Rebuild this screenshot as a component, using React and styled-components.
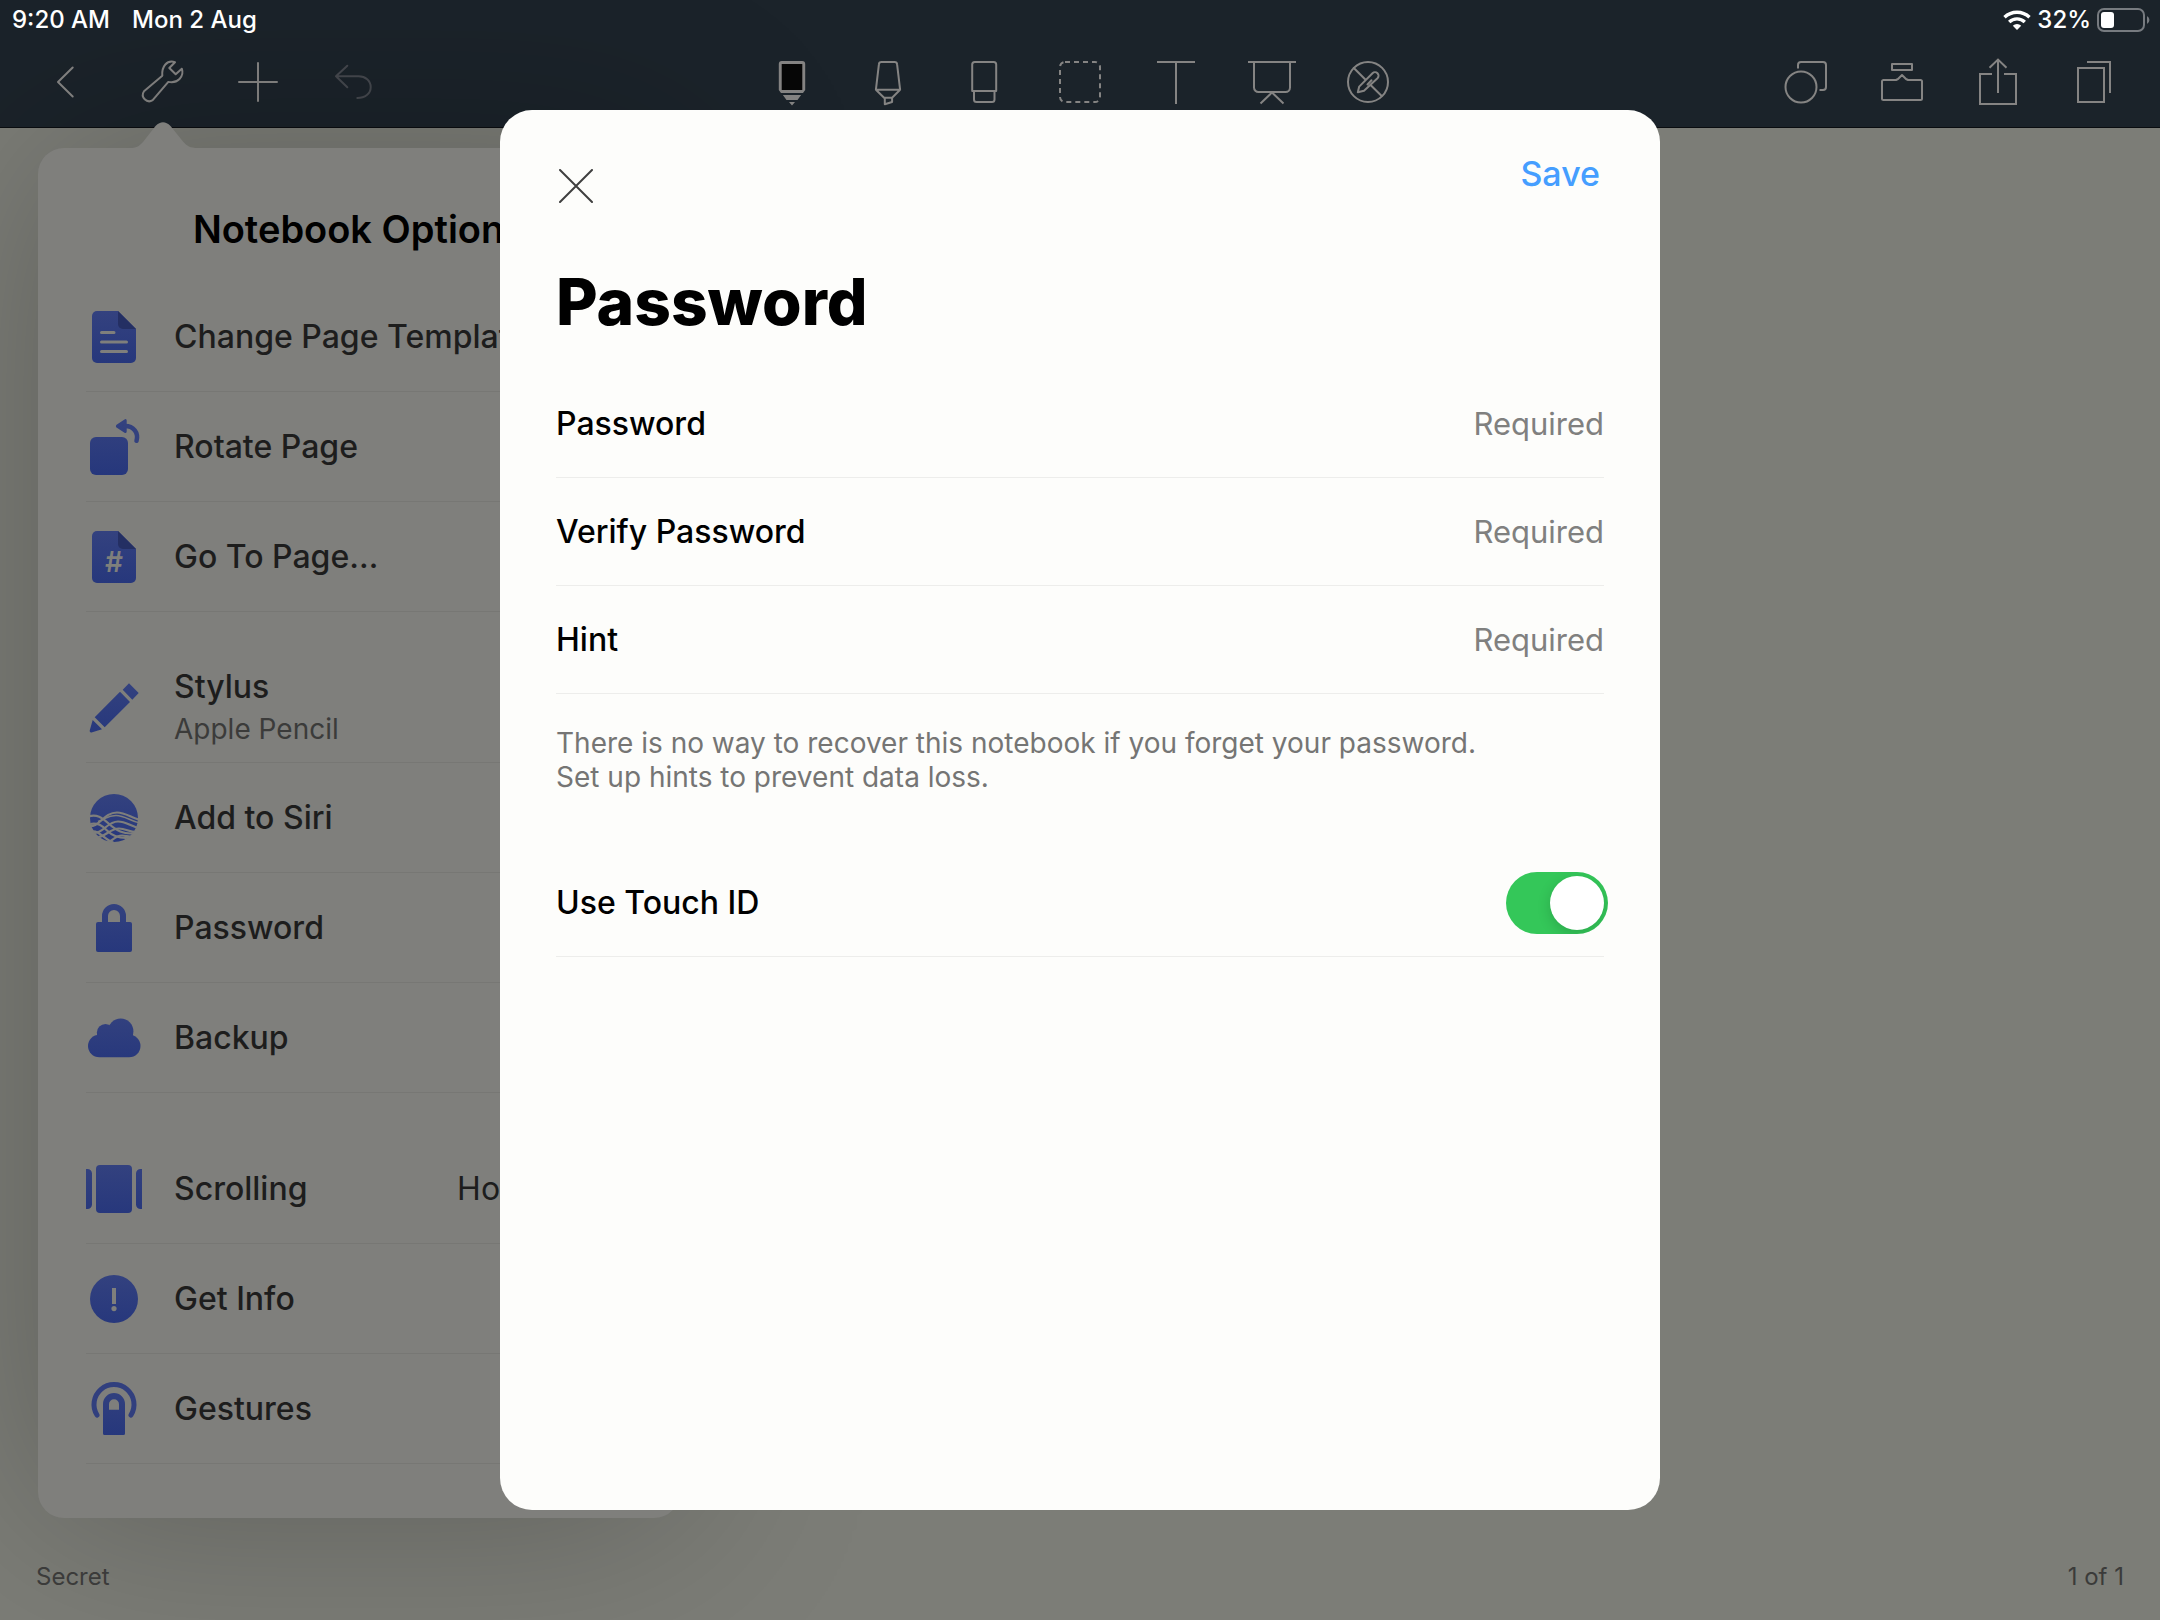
import React, { useState } from "react";
import styled, { createGlobalStyle } from "styled-components";

const color = {
  bar: "#1b232a",
  barEdge: "#0a0d10",
  line: "#858483",
  lineOff: "#45484e",
  canvas: "#7c7d77",
  popover: "#7f7f7c",
  popoverRule: "#777774",
  ink: "#1d1d1d",
  inkSoft: "#3b3b3a",
  sheet: "#fdfdfb",
  sheetRule: "#ededeb",
  accent: "#459eff",
  green: "#34c759",
};

const GlobalStyle = createGlobalStyle`
  *, *::before, *::after { box-sizing: border-box; }
  body { margin: 0; background: ${color.canvas}; }
  body, button, input { font-family: Inter, "Liberation Sans", sans-serif; }
  button { border: 0; padding: 0; background: none; color: inherit; cursor: pointer; }
  svg { display: block; flex: none; }
`;

const Screen = styled.div`
  position: relative;
  min-height: 100vh;
  display: flex;
  flex-direction: column;
  background: ${color.canvas};
  overflow: hidden;
`;

/* ---------- top bar ---------- */

const TopBar = styled.header`
  background: ${color.bar};
  border-bottom: 1px solid ${color.barEdge};
`;

const StatusBar = styled.div`
  position: relative;
  z-index: 1;
  display: flex;
  justify-content: space-between;
  align-items: center;
  height: 40px;
  padding: 0 10px 0 12px;
  color: #fff;
  font-size: 24px;
  font-weight: 500;
  line-height: 32px;
`;

const StatusGroup = styled.div`
  display: flex;
  align-items: center;
  gap: ${(p) => p.$gap}px;
`;

const Toolbar = styled.nav`
  display: grid;
  grid-template-columns: 1fr auto 1fr;
  height: 87px;
  padding: 0 18px 4px;
`;

const ToolGroup = styled.div`
  display: flex;
  justify-content: ${(p) => (p.$end ? "flex-end" : "flex-start")};
`;

const ToolButton = styled.button`
  width: 96px;
  display: grid;
  place-items: center;
  color: ${(p) => (p.disabled ? color.lineOff : color.line)};
`;

const ToolSvg = ({ children }) => (
  <svg width="48" height="48" viewBox="0 0 48 48" fill="none" stroke="currentColor"
    strokeWidth="2" strokeLinecap="round" strokeLinejoin="round" aria-hidden="true">
    {children}
  </svg>
);

const leftTools = [
  { name: "Back", art: <path d="M30.7 9.5 16 24l14.7 14.5" /> },
  {
    name: "Notebook options",
    art: <path d="M37 4.2C29 1.500 23.500 8.500 24.300 17.700L6 33.200a6.400 6.400 0 0 0 8.700 9L30.300 23.900C39.500 26 46.500 18.500 43.800 10.700L37.700 16.300 31.300 10Z" />,
  },
  { name: "Add", art: <path d="M24 5v38M5 24h38" /> },
  { name: "Undo", disabled: true, art: <path d="M17.300 7.800 6 18.300l11.300 11M6 18.300h22.700c6.600 0 12 4.500 12 10.900S35 40 27.300 40" /> },
];

const centerTools = [
  {
    name: "Pen",
    art: (
      <>
        <path fill="currentColor" stroke="none" d="M13.800 3h20.400a3 3 0 0 1 3 3v26l-2.200 3H13l-2.200-3V6a3 3 0 0 1 3-3ZM14.900 37h18.200l-3.600 5h-11ZM21 44h6l-3 3.500Z" />
        <path fill="#070707" stroke="none" d="M13.700 6h20.600v26H13.700Z" />
      </>
    ),
  },
  {
    name: "Highlighter",
    art: (
      <path d="M17.500 4h13q2.400 0 2.600 2.400l3 25.300-8 8h-8l-8.200-8 3-25.300Q15.100 4 17.500 4ZM11.900 31.700h24.200M20.800 39.700v6.500l7.300-2.200v-4.300" />
    ),
  },
  {
    name: "Eraser",
    art: (
      <>
        <path d="M14.700 4h19a2.500 2.500 0 0 1 2.500 2.500V33h-24V6.500A2.500 2.500 0 0 1 14.700 4Z" />
        <path d="M14 33v8.500a2.500 2.500 0 0 0 2.500 2.500H32a2.500 2.500 0 0 0 2.500-2.500V33" />
      </>
    ),
  },
  {
    name: "Lasso",
    art: <rect x="4" y="4" width="40" height="40" rx="5" strokeDasharray="5 4" strokeLinecap="butt" />,
  },
  { name: "Text", art: <path strokeLinecap="butt" d="M5 4h38M24 4v42" /> },
  {
    name: "Presentation",
    art: <path strokeLinecap="butt" d="M0 4h48M6 4v25.500a4.500 4.500 0 0 0 4.500 4.500h27a4.500 4.500 0 0 0 4.500-4.500V4M12.500 45.500 24 34.500l11.500 11" />,
  },
  {
    name: "Drawing off",
    art: (
      <>
        <circle cx="24" cy="24" r="20" />
        <path d="M9.800 10l11 11M26.800 27.300 37.700 38M13.800 34.200l1.400-5.600 13.300-13.300a3.500 3.500 0 0 1 5 5L20 32.700ZM23.500 26.500l4-4.200" />
      </>
    ),
  },
];

const rightTools = [
  {
    name: "Shapes",
    art: (
      <>
        <circle cx="19" cy="29" r="15.500" />
        <path strokeLinecap="butt" d="M16 10.500V7a3 3 0 0 1 3-3h22a3 3 0 0 1 3 3v22a3 3 0 0 1-3 3h-3.500" />
      </>
    ),
  },
  {
    name: "Toolbox",
    art: (
      <>
        <rect x="14" y="6" width="20" height="6" />
        <path d="M5.500 22H18l2-1 4-4 4 4 2 1h12.500a1.500 1.500 0 0 1 1.500 1.500v17a1.500 1.500 0 0 1-1.500 1.500h-37a1.500 1.500 0 0 1-1.500-1.500v-17A1.500 1.500 0 0 1 5.500 22Z" />
      </>
    ),
  },
  { name: "Share", art: <path strokeLinecap="butt" strokeLinejoin="miter" d="M18 16H6v30h36V16H30M24 1.500V35M15.500 9.800 24 1.600l8.500 8.200" /> },
  { name: "Pages", art: <path strokeLinecap="butt" strokeLinejoin="miter" d="M8 10h26v34H8ZM17 4h23v31" /> },
];

const ToolSet = ({ tools, end }) => (
  <ToolGroup $end={end}>
    {tools.map((t) => (
      <ToolButton key={t.name} type="button" aria-label={t.name} disabled={t.disabled}>
        <ToolSvg>{t.art}</ToolSvg>
      </ToolButton>
    ))}
  </ToolGroup>
);

const WifiIcon = () => (
  <svg width="28" height="20" viewBox="0 0 28 20" fill="none" stroke="#fff" strokeWidth="3.400" aria-hidden="true">
    <path d="M1.500 7.300a18 18 0 0 1 25 0M6.200 12a11.300 11.300 0 0 1 15.600 0" />
    <path fill="#fff" stroke="none" d="M14 20l-4.200-4.300a6 6 0 0 1 8.400 0Z" />
  </svg>
);

const BatteryIcon = () => (
  <svg width="53" height="24" viewBox="0 0 53 24" fill="none" aria-hidden="true">
    <rect x="1" y="1" width="46" height="22" rx="6" stroke="#777b80" strokeWidth="2" />
    <rect x="4" y="4" width="13" height="16" rx="3" fill="#fff" />
    <path d="M50 8a4.500 4.500 0 0 1 0 8Z" fill="#777b80" />
  </svg>
);

/* ---------- notebook options popover ---------- */

const Popover = styled.aside`
  position: absolute;
  top: 148px;
  left: 38px;
  width: 642px;
  padding: 48px 48px 54px;
  border-radius: 26px;
  background: ${color.popover};
  box-shadow: 0 0 200px rgba(0, 0, 0, 0.24);
`;

const PopoverArrow = styled.svg`
  position: absolute;
  top: -26px;
  left: 92px;
`;

const PopoverTitle = styled.h2`
  margin: 0 0 20px;
  color: #000;
  font-size: 38px;
  font-weight: 600;
  line-height: 66px;
  text-align: center;
`;

const MenuGroup = styled.ul`
  list-style: none;
  margin: 0;
  padding: 0;

  & + & {
    margin-top: 41px;
  }
`;

const MenuItem = styled.li`
  border-bottom: 1px solid ${color.popoverRule};
`;

const MenuButton = styled.button`
  width: 100%;
  height: 109px;
  display: flex;
  align-items: center;
  gap: 32px;
  color: ${color.ink};
  font-size: 32px;
  line-height: 40px;
  text-align: left;
  white-space: nowrap;
`;

const MenuText = styled.span`
  flex: 1;
  display: flex;
  flex-direction: column;
  gap: 2px;
  font-weight: 500;
`;

const MenuNote = styled.span`
  color: ${color.inkSoft};
  font-size: 28px;
  font-weight: 400;
`;

const MenuValue = styled.span`
  padding-right: 20px;
`;

const MenuSvg = ({ children }) => (
  <svg width="56" height="56" viewBox="0 0 56 56" fill="url(#menu-blue)" aria-hidden="true">
    {children}
  </svg>
);

const GradientDefs = styled.svg`
  position: absolute;
`;

const BlueGradient = () => (
  <GradientDefs width="0" height="0" aria-hidden="true">
    <defs>
      <linearGradient id="menu-blue" gradientUnits="userSpaceOnUse" x1="0" y1="0" x2="0" y2="56">
        <stop offset="0" stopColor="#34427f" />
        <stop offset="1" stopColor="#26377c" />
      </linearGradient>
      <clipPath id="siri-disc">
        <circle cx="28" cy="28" r="24.500" />
      </clipPath>
    </defs>
  </GradientDefs>
);

const DocShape = () => (
  <>
    <path d="M11 2h21l18 18v29a5 5 0 0 1-5 5H11a5 5 0 0 1-5-5V7a5 5 0 0 1 5-5Z" />
    <path fill="#242f63" d="M32 2l18 18H37a5 5 0 0 1-5-5Z" />
  </>
);

const menu = [
  [
    {
      label: "Change Page Template",
      art: (
        <>
          <DocShape />
          <path stroke={color.popover} strokeWidth="3" strokeLinecap="round" d="M15.500 23.500h12.500M15.500 33h25M15.500 42.500h25" />
        </>
      ),
    },
    {
      label: "Rotate Page",
      art: (
        <>
          <rect x="4" y="18" width="38" height="38" rx="6" />
          <path d="M30.500 5.800 38.500.4q2.200-1 2.200 1.200v11q0 2.200-2.200 1.100L30.500 8.400q-1.200-1.200 0-2.600Z" />
          <path fill="none" stroke="#33417e" strokeWidth="4.500" strokeLinecap="round" d="M39 7c8.500 0 13.800 6.500 11.500 14.800" />
        </>
      ),
    },
    {
      label: "Go To Page…",
      art: (
        <>
          <DocShape />
          <text x="28" y="43" textAnchor="middle" fontFamily="Inter, sans-serif" fontSize="28" fontWeight="600" fill={color.popover}>#</text>
        </>
      ),
    },
  ],
  [
    {
      label: "Stylus",
      note: "Apple Pencil",
      art: <path d="M43 3.300 52.700 13 46.300 19.700 36.700 9.700ZM34 11.700 44 22 18.700 47.300 8.700 37.300ZM6.700 40 16 49.300 5.500 52.500Q3.400 52.800 3.700 50.500Z" />,
    },
    {
      label: "Add to Siri",
      art: (
        <>
          <circle cx="28" cy="28" r="24" />
          <g clipPath="url(#siri-disc)" fill="none" stroke={color.popover} strokeWidth="2.200">
            <path d="M2 26.500c9-2.500 14 1 20 6.500s16 14 32 9" />
            <path d="M2 36c12 2 15-13.500 29-13.500 9 0 15 6 24 7.500" />
            <path strokeWidth="1.600" d="M12 31.500c8-3 10-6 18-6 9 0 15 6 24 7.500" />
            <path d="M4 43c14 2 16-11.500 28-11.500 9 0 12 5 22 6.500" />
            <path d="M9 48c11-1 15-9.500 24-9.500 8 0 10 4.500 20 3.500" />
            <path d="M4 34c8-1.500 12 1.500 17 6.500s12 9 25 7" />
            <path d="M18 54c8-1.500 10-8.500 18-8.500 4 0 8 2 14 1" />
            <path d="M5 41.500c9-1.500 12 7.500 24 12" />
          </g>
        </>
      ),
    },
    {
      label: "Password",
      art: (
        <>
          <rect x="10" y="22" width="36" height="30" rx="2" />
          <path d="M16 23v-7a12 12 0 0 1 24 0v7h-6v-7a6 6 0 0 0-12 0v7Z" />
        </>
      ),
    },
    {
      label: "Backup",
      art: (
        <>
          <rect x="2" y="24.700" width="52.500" height="22.600" rx="11.300" />
          <circle cx="19.500" cy="22.700" r="8.700" />
          <circle cx="34.700" cy="21.300" r="12.700" />
          <path d="M11 22h36v12H11Z" />
        </>
      ),
    },
  ],
  [
    {
      label: "Scrolling",
      value: "Horizontal",
      art: (
        <>
          <rect x="10" y="4" width="36" height="48" rx="4" />
          <path d="M0 8h1.500A4.500 4.500 0 0 1 6 12.500v31A4.500 4.500 0 0 1 1.500 48H0ZM56 8h-1.500a4.500 4.500 0 0 0-4.500 4.500v31a4.500 4.500 0 0 0 4.500 4.500H56Z" />
        </>
      ),
    },
    {
      label: "Get Info",
      art: (
        <>
          <circle cx="28" cy="28" r="24" />
          <path fill={color.popover} d="M26 17h4v16h-4Z" />
          <circle fill={color.popover} cx="28" cy="37.600" r="2.600" />
        </>
      ),
    },
    {
      label: "Gestures",
      art: (
        <>
          <path fillRule="evenodd" d="M17 23a11 11 0 0 1 22 0v29.500q0 1.500-1.500 1.500h-19Q17 54 17 52.500ZM23 28.700h10v-5.400a5 5 0 0 0-10 0Z" />
          <path fill="none" stroke="#313f7e" strokeWidth="5" strokeLinecap="round" d="M11 34A20 20 0 1 1 45 34" />
        </>
      ),
    },
  ],
];

const OptionsPopover = () => (
  <Popover aria-label="Notebook Options">
    <PopoverArrow width="68" height="27" viewBox="0 0 68 27" fill={color.popover} aria-hidden="true">
      <path d="M0 27v-1c6 0 9-1.500 13-6L25.500 4Q33 -3.500 40.500 4L53 19.500C57 24 60 26 68 26v1Z" />
    </PopoverArrow>
    <PopoverTitle>Notebook Options</PopoverTitle>
    <BlueGradient />
    {menu.map((group, i) => (
      <MenuGroup key={i}>
        {group.map((item) => (
          <MenuItem key={item.label}>
            <MenuButton type="button">
              <MenuSvg>{item.art}</MenuSvg>
              <MenuText>
                {item.label}
                {item.note && <MenuNote>{item.note}</MenuNote>}
              </MenuText>
              {item.value && <MenuValue>{item.value}</MenuValue>}
            </MenuButton>
          </MenuItem>
        ))}
      </MenuGroup>
    ))}
  </Popover>
);

/* ---------- page footer ---------- */

const Canvas = styled.main`
  flex: 1;
  display: flex;
  flex-direction: column;
  justify-content: flex-end;
`;

const PageFooter = styled.footer`
  position: relative;
  z-index: 1;
  display: flex;
  justify-content: space-between;
  padding: 0 36px 27px;
  color: ${color.inkSoft};
  font-size: 24px;
  line-height: 32px;
`;

/* ---------- password sheet ---------- */

const Overlay = styled.div`
  position: fixed;
  inset: 0;
  z-index: 2;
  display: grid;
  place-items: center;
`;

const Sheet = styled.form`
  width: min(1160px, 92vw);
  min-height: min(1400px, 92vh);
  padding: 44px 56px;
  border-radius: 32px;
  background: ${color.sheet};
  color: #000;
`;

const SheetHeader = styled.div`
  display: flex;
  justify-content: space-between;
  align-items: flex-start;
`;

const CloseButton = styled.button`
  height: 64px;
  width: 40px;
  display: grid;
  place-items: center;
`;

const SaveButton = styled.button`
  padding: 0 4px;
  color: ${color.accent};
  font-size: 34px;
  font-weight: 500;
  line-height: 40px;
`;

const SheetTitle = styled.h1`
  margin: 48px 0 32px;
  font-size: 64px;
  font-weight: 800;
  line-height: 72px;
`;

const Field = styled.div`
  display: flex;
  align-items: center;
  justify-content: space-between;
  height: 108px;
  border-bottom: 1px solid ${color.sheetRule};
  font-size: 32px;
  line-height: 40px;
`;

const FieldLabel = styled.label`
  font-weight: 500;
`;

const FieldInput = styled.input`
  flex: 1;
  min-width: 0;
  padding: 0;
  border: 0;
  outline: 0;
  background: none;
  color: #000;
  font-size: 31px;
  line-height: 40px;
  text-align: right;

  &::placeholder {
    color: #80807f;
    opacity: 1;
  }
`;

const Hint = styled.p`
  margin: 32px 0 55px;
  color: #757574;
  font-size: 28px;
  line-height: 34px;
`;

const Switch = styled.input`
  appearance: none;
  width: 102px;
  height: 62px;
  margin: 0 -4px 0 0;
  padding: 4px;
  border-radius: 31px;
  overflow: hidden;
  display: flex;
  justify-content: ${(p) => (p.checked ? "flex-end" : "flex-start")};
  background: ${(p) => (p.checked ? color.green : "#e5e5e4")};
  cursor: pointer;

  &::before {
    content: "";
    width: 54px;
    height: 54px;
    border-radius: 50%;
    background: #fff;
    box-shadow: 0 4px 14px rgba(0, 0, 0, 0.16);
  }
`;

const fields = [
  { id: "password", label: "Password", type: "password" },
  { id: "verify", label: "Verify Password", type: "password" },
  { id: "hint", label: "Hint", type: "text" },
];

const PasswordSheet = () => {
  const [touchId, setTouchId] = useState(true);
  return (
    <Overlay>
      <Sheet role="dialog" aria-labelledby="sheet-title" onSubmit={(e) => e.preventDefault()}>
        <SheetHeader>
          <CloseButton type="button" aria-label="Close">
            <svg width="34" height="34" viewBox="0 0 34 34" stroke="#3f3f3f" strokeWidth="2" strokeLinecap="round" aria-hidden="true">
              <path d="M1 1l32 32M33 1 1 33" />
            </svg>
          </CloseButton>
          <SaveButton type="submit">Save</SaveButton>
        </SheetHeader>
        <SheetTitle id="sheet-title">Password</SheetTitle>
        {fields.map((f) => (
          <Field key={f.id}>
            <FieldLabel htmlFor={f.id}>{f.label}</FieldLabel>
            <FieldInput id={f.id} type={f.type} placeholder="Required" autoComplete="off" />
          </Field>
        ))}
        <Hint>
          There is no way to recover this notebook if you forget your password.
          <br />
          Set up hints to prevent data loss.
        </Hint>
        <Field>
          <FieldLabel htmlFor="touch-id">Use Touch ID</FieldLabel>
          <Switch id="touch-id" type="checkbox" role="switch" checked={touchId} onChange={(e) => setTouchId(e.target.checked)} />
        </Field>
      </Sheet>
    </Overlay>
  );
};

export default function App() {
  return (
    <Screen>
      <GlobalStyle />
      <TopBar>
        <StatusBar>
          <StatusGroup $gap={22}>
            <span>9:20 AM</span>
            <span>Mon 2 Aug</span>
          </StatusGroup>
          <StatusGroup $gap={6}>
            <WifiIcon />
            <span>32%</span>
            <BatteryIcon />
          </StatusGroup>
        </StatusBar>
        <Toolbar>
          <ToolSet tools={leftTools} />
          <ToolSet tools={centerTools} />
          <ToolSet tools={rightTools} end />
        </Toolbar>
      </TopBar>
      <OptionsPopover />
      <Canvas>
        <PageFooter>
          <span>Secret</span>
          <span>1 of 1</span>
        </PageFooter>
      </Canvas>
      <PasswordSheet />
    </Screen>
  );
}
